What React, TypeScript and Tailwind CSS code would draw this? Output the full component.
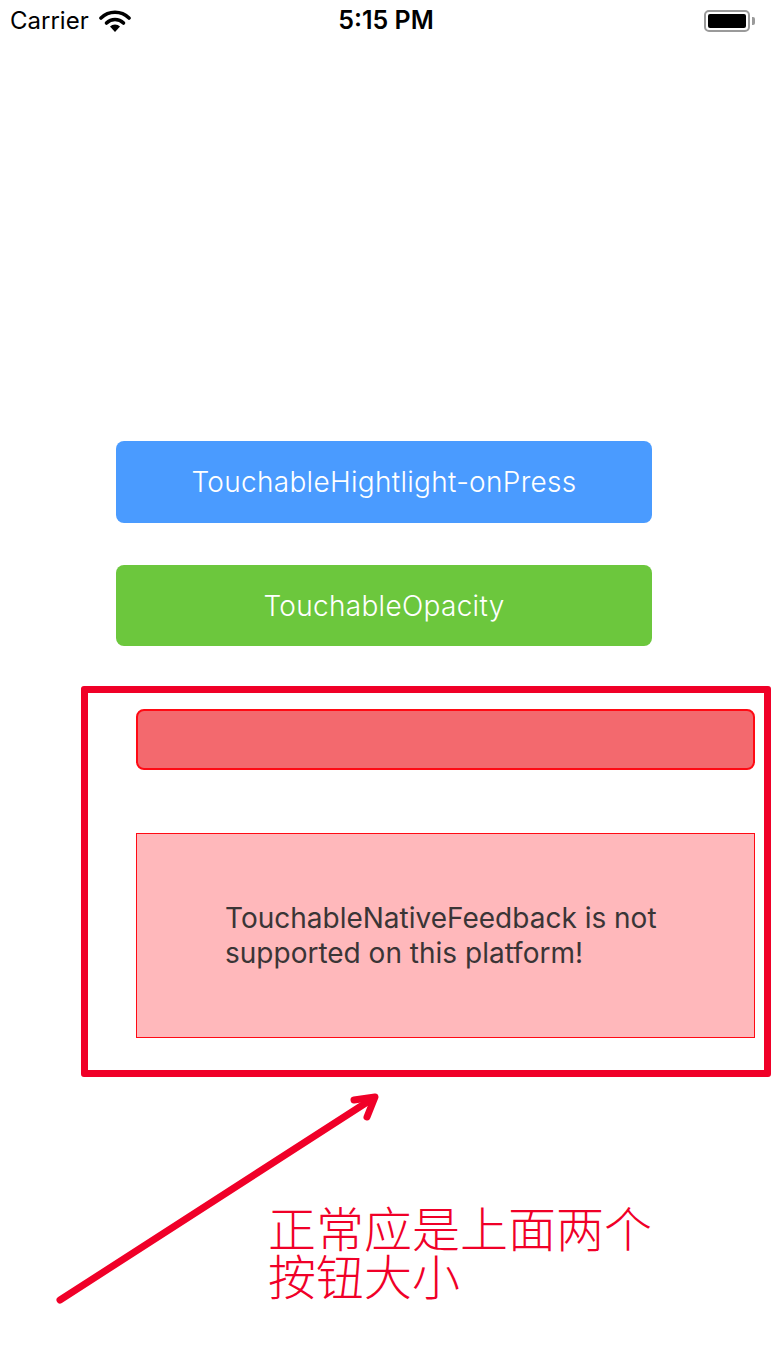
import React from 'react';

// ---------------------------------------------------------------------------
// Status bar (iOS simulator)
// ---------------------------------------------------------------------------

function StatusBar() {
  return (
    <div className="relative flex h-[42px] items-center px-[10px] text-black">
      <div className="flex items-center gap-[10px]">
        <span className="text-[24px]">Carrier</span>
        <svg width="32" height="24" viewBox="0 0 32 24" aria-hidden="true">
          <path d="M2 9 A20 20 0 0 1 30 9" fill="none" stroke="#000" strokeWidth="3.6" strokeLinecap="round" />
          <path d="M7.5 14 A12 12 0 0 1 24.5 14" fill="none" stroke="#000" strokeWidth="3.6" strokeLinecap="round" />
          <path d="M16 23 L11 17.5 A7 7 0 0 1 21 17.5 Z" fill="#000" />
        </svg>
      </div>
      <span className="absolute left-1/2 -translate-x-1/2 text-[25px] font-semibold">5:15 PM</span>
      <div className="ml-auto mr-[7px] flex items-center">
        <div className="flex h-[22px] w-[46px] items-center rounded-[5px] border-[2px] border-[#9a9a9a] p-[2px]">
          <div className="h-full w-full rounded-[2px] bg-black" />
        </div>
        <div className="ml-[2px] h-[8px] w-[3px] rounded-r-[2px] bg-[#9a9a9a]" />
      </div>
    </div>
  );
}

// ---------------------------------------------------------------------------
// Main
// ---------------------------------------------------------------------------

export default function App() {
  return (
    <div
      className="relative h-[1372px] w-[772px] overflow-hidden bg-white"
      style={{ fontFamily: 'Inter, "Noto Sans", "Noto Sans CJK SC", sans-serif' }}
    >
      <StatusBar />

      {/* ── Touchable buttons ─────────────────────────────────────────── */}
      <div className="mt-[399px] flex flex-col gap-[42px] pl-[116px]">
        <button className="flex h-[82px] w-[536px] items-center justify-center rounded-[8px] bg-[#4a9bff] text-[28px] font-light tracking-[0.3px] text-white">
          TouchableHightlight-onPress
        </button>
        <button className="flex h-[81px] w-[536px] items-center justify-center rounded-[8px] bg-[#6cc73d] text-[28px] font-light tracking-[0.3px] text-white">
          TouchableOpacity
        </button>
      </div>

      {/* ── Annotated area ────────────────────────────────────────────── */}
      <div className="ml-[81px] mt-[40px] h-[391px] w-[690px] rounded-[3px] border-[7px] border-[#f00028] pl-[48px] pr-[8px] pt-[16px]">
        <div className="h-[61px] w-[619px] rounded-[8px] border-[2px] border-[#ff0a14] bg-[#f3696e]" />
        <div className="mt-[63px] flex h-[205px] w-[619px] items-center border-[1.5px] border-[#ff0a14] bg-[#ffb8bb] pl-[88px]">
          <p className="text-[28px] leading-[35px] text-[#3a3536]">
            TouchableNativeFeedback is not
            <br />
            supported on this platform!
          </p>
        </div>
      </div>

      {/* ── Annotation arrow + note ───────────────────────────────────── */}
      <svg
        className="absolute left-0 top-[1080px]"
        width="420"
        height="240"
        viewBox="0 1080 420 240"
        aria-hidden="true"
      >
        <g fill="none" stroke="#f00028" strokeWidth="7" strokeLinecap="round" strokeLinejoin="round">
          <path d="M60 1300 L372 1099" />
          <path d="M354 1100 L375 1097 L367 1117" />
        </g>
      </svg>
      <div
        className="ml-[268px] mt-[125px] flex flex-col text-[48px] font-light leading-[48px] text-[#f00028]"
        style={{ fontFamily: '"Noto Sans CJK SC", sans-serif' }}
      >
        <span>正常应是上面两个</span>
        <span>按钮大小</span>
      </div>
    </div>
  );
}
